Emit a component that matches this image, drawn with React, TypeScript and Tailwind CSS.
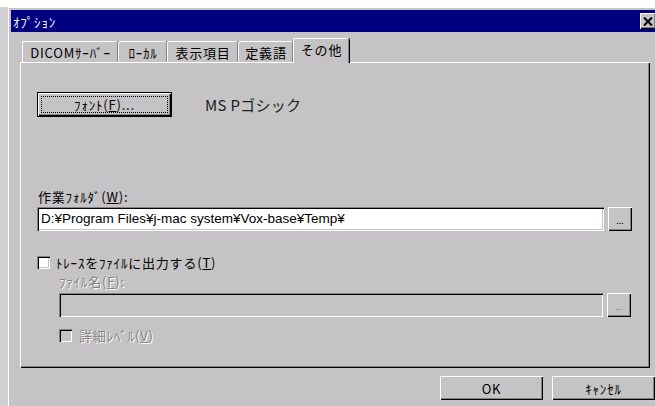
import React from "react";

const face = "bg-[#c6c3c6]";
const raised =
  "shadow-[inset_1px_1px_0_#ffffff,inset_-1px_-1px_0_#000000,inset_-2px_-2px_0_#848284]";
const sunken =
  "shadow-[inset_1px_1px_0_#848284,inset_2px_2px_0_#000000,inset_-1px_-1px_0_#ffffff,inset_-2px_-2px_0_#c6c3c6]";

function Tab({ label, w, active }: { label: string; w: string; active?: boolean }) {
  return (
    <div
      className={`${w} ${active ? "h-[25px] -mb-[1px] z-10" : "h-[21px]"} ${face} relative flex items-center justify-center rounded-t-[2px] border-l border-t border-white shadow-[inset_-1px_0_0_#848284,1px_0_0_#000000]`}
    >
      <span className={active ? "-mt-[3px]" : ""}>{label}</span>
    </div>
  );
}

function Browse({ disabled }: { disabled?: boolean }) {
  return (
    <div
      className={`w-[24px] h-[24px] ${face} ${raised} flex items-end justify-center pb-[6px] text-[9px] leading-none tracking-normal ${disabled ? "text-[#848284]" : "text-black"}`}
    >
      ...
    </div>
  );
}

export default function App() {
  return (
    <div className="w-[655px] h-[406px] overflow-hidden bg-white text-[13px] leading-none tracking-[0.8px] text-black font-['Noto_Sans_CJK_JP','Liberation_Sans',sans-serif]">
      <div className="mt-[7px] flex h-[399px]">
        <div className="w-[8px] bg-[#d2d0d2]" />
        <div className={`flex-1 ${face} border-l border-t border-white pl-[2px] pt-[2px] flex flex-col`}>
          {/* title bar */}
          <div className="h-[22px] bg-[#000080] flex items-center justify-between pl-[2px]">
            <span className="text-white text-[13px]">ｵﾌﾟｼｮﾝ</span>
            <div className={`w-[16px] h-[16px] -mr-[1px] ${face} ${raised} flex items-center justify-center`}>
              <svg width="10" height="9" viewBox="0 0 10 9">
                <path d="M1 0.5 L9 8.5 M9 0.5 L1 8.5" stroke="#000" strokeWidth="2" />
              </svg>
            </div>
          </div>

          {/* tabs + page */}
          <div className="pl-[9px] pr-[4px] pt-[6px]">
            <div className="flex items-end h-[24px] pl-[2px]">
              <Tab label="DICOMｻｰﾊﾞｰ" w="w-[96px]" />
              <Tab label="ﾛｰｶﾙ" w="w-[49px]" />
              <Tab label="表示項目" w="w-[71px]" />
              <Tab label="定義語" w="w-[55px]" />
              <Tab label="その他" w="w-[56px]" active />
            </div>
            <div className={`h-[306px] w-[630px] ${face} shadow-[inset_1px_1px_0_#ffffff,inset_-1px_-1px_0_#000000,inset_-2px_-2px_0_#848284] pl-[17px] pt-[30px] flex flex-col`}>
              {/* font row */}
              <div className="flex items-center">
                <div className="w-[135px] h-[25px] border border-black">
                  <div className={`w-full h-full ${raised} p-[3px]`}>
                    <div className="w-full h-full border border-dotted border-black flex items-center justify-center">
                      <span>
                        ﾌｫﾝﾄ(<span className="underline">F</span>)...
                      </span>
                    </div>
                  </div>
                </div>
                <span className="ml-[33px] text-[15px] tracking-[0.3px] text-[#202020]">MS Pゴシック</span>
              </div>

              {/* working folder */}
              <div className="mt-[73px] pl-[1px]">作業ﾌｫﾙﾀﾞ(<span className="underline">W</span>):</div>
              <div className="mt-[4px] flex items-center gap-[4px]">
                <div className={`w-[567px] h-[24px] bg-white ${sunken} flex items-center pl-[4px] font-['Liberation_Sans',sans-serif] text-[13.5px] tracking-normal`}>
                  D:¥Program Files¥j-mac system¥Vox-base¥Temp¥
                </div>
                <Browse />
              </div>

              {/* trace */}
              <div className="mt-[25px] flex items-center">
                <div className={`w-[13px] h-[13px] bg-white ${sunken}`} />
                <span className="ml-[6px]">
                  ﾄﾚｰｽをﾌｧｲﾙに出力する(<span className="underline">T</span>)
                </span>
              </div>
              <div className="ml-[22px] mt-[6px] text-[#848284] [text-shadow:1px_1px_0_#ffffff]">
                ﾌｧｲﾙ名(<span className="underline">F</span>):
              </div>
              <div className="ml-[22px] mt-[5px] flex items-center gap-[4px]">
                <div className={`w-[544px] h-[24px] ${face} ${sunken}`} />
                <Browse disabled />
              </div>
              <div className="ml-[22px] mt-[12px] flex items-center">
                <div className={`w-[13px] h-[13px] ${face} ${sunken}`} />
                <span className="ml-[7px] text-[#848284] [text-shadow:1px_1px_0_#ffffff]">
                  詳細ﾚﾍﾞﾙ(<span className="underline">V</span>)
                </span>
              </div>
            </div>

            {/* dialog buttons */}
            <div className="mt-[8px] flex justify-end gap-[9px] -mr-[4px]">
              <div className={`w-[103px] h-[24px] ${face} ${raised} flex items-center justify-center`}>OK</div>
              <div className={`w-[103px] h-[24px] ${face} ${raised} flex items-center justify-center`}>ｷｬﾝｾﾙ</div>
            </div>
          </div>
        </div>
      </div>
    </div>
  );
}
